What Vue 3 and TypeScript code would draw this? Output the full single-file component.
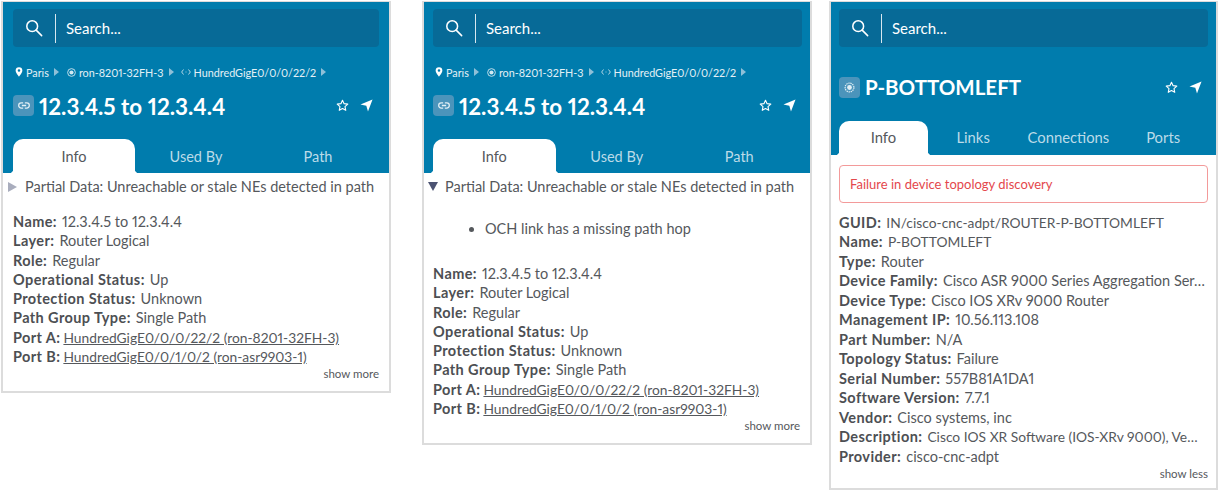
<script setup lang="ts">
import { ref } from "vue";

type Field = { label: string; value: string; tight?: boolean; link?: boolean };
type Crumb = { icon: "pin" | "node" | "port"; text: string };
type Panel = {
  id: string;
  crumbs: Crumb[];
  kind: "link" | "device";
  title: string;
  tabs: string[];
  fields: Field[];
  toggle: string;
  partial?: boolean;
  partialOpen?: boolean;
  failure?: string;
};

const crumbs: Crumb[] = [
  { icon: "pin", text: "Paris" },
  { icon: "node", text: "ron-8201-32FH-3" },
  { icon: "port", text: "HundredGigE0/0/0/22/2" },
];

const linkFields: Field[] = [
  { label: "Name", value: "12.3.4.5 to 12.3.4.4" },
  { label: "Layer", value: "Router Logical" },
  { label: "Role", value: "Regular" },
  { label: "Operational Status", value: "Up" },
  { label: "Protection Status", value: "Unknown" },
  { label: "Path Group Type", value: "Single Path" },
  { label: "Port A", value: "HundredGigE0/0/0/22/2 (ron-8201-32FH-3)", link: true, tight: true },
  { label: "Port B", value: "HundredGigE0/0/1/0/2 (ron-asr9903-1)", link: true, tight: true },
];

const panels = ref<Panel[]>([
  {
    id: "closed",
    crumbs,
    kind: "link",
    title: "12.3.4.5 to 12.3.4.4",
    tabs: ["Info", "Used By", "Path"],
    fields: linkFields,
    toggle: "show more",
    partial: true,
    partialOpen: false,
  },
  {
    id: "open",
    crumbs,
    kind: "link",
    title: "12.3.4.5 to 12.3.4.4",
    tabs: ["Info", "Used By", "Path"],
    fields: linkFields,
    toggle: "show more",
    partial: true,
    partialOpen: true,
  },
  {
    id: "device",
    crumbs: [],
    kind: "device",
    title: "P-BOTTOMLEFT",
    tabs: ["Info", "Links", "Connections", "Ports"],
    failure: "Failure in device topology discovery",
    toggle: "show less",
    fields: [
      { label: "GUID", value: "IN/cisco-cnc-adpt/ROUTER-P-BOTTOMLEFT", tight: true },
      { label: "Name", value: "P-BOTTOMLEFT", tight: true },
      { label: "Type", value: "Router" },
      { label: "Device Family", value: "Cisco ASR 9000 Series Aggregation Ser…" },
      { label: "Device Type", value: "Cisco IOS XRv 9000 Router" },
      { label: "Management IP", value: "10.56.113.108" },
      { label: "Part Number", value: "N/A" },
      { label: "Topology Status", value: "Failure" },
      { label: "Serial Number", value: "557B81A1DA1" },
      { label: "Software Version", value: "7.7.1" },
      { label: "Vendor", value: "Cisco systems, inc" },
      { label: "Description", value: "Cisco IOS XR Software (IOS-XRv 9000), Ve…", tight: true },
      { label: "Provider", value: "cisco-cnc-adpt" },
    ],
  },
]);
</script>

<template>
  <div class="page">
    <section v-for="panel in panels" :key="panel.id" class="card" :class="[panel.kind, panel.id]">
      <header class="head">
        <div class="search">
          <svg class="search-icon" viewBox="0 0 20 20" width="18" height="18" fill="none" stroke="#fff" stroke-width="1.700">
            <circle cx="8" cy="8" r="6" />
            <path d="M12.400 12.400 18.500 18.500" stroke-linecap="round" />
          </svg>
          <span class="search-text">Search...</span>
        </div>

        <div v-if="panel.crumbs.length" class="crumbs">
          <template v-for="crumb in panel.crumbs" :key="crumb.text">
            <svg v-if="crumb.icon === 'pin'" viewBox="0 0 10 12" width="8" height="10" fill="#fff">
              <path fill-rule="evenodd" d="M5 0a4.200 4.200 0 0 0-4.200 4.200C.8 7 5 12 5 12s4.200-5 4.200-7.800A4.200 4.200 0 0 0 5 0Zm0 5.800a1.600 1.600 0 1 1 0-3.200 1.600 1.600 0 0 1 0 3.200Z" />
            </svg>
            <svg v-else-if="crumb.icon === 'node'" class="crumb-node" viewBox="0 0 10 10" width="9" height="9" fill="none" stroke="#d3e8f1">
              <circle cx="5" cy="5" r="4.300" stroke-width="1" />
              <circle cx="5" cy="5" r="2.300" fill="#d3e8f1" stroke="none" />
            </svg>
            <svg v-else viewBox="0 0 12 8" width="10" height="8" fill="none" stroke="#d3e8f1" stroke-width="1">
              <path d="M3 1 .8 4 3 7M9 1l2.200 3L9 7" />
              <path d="M5 4h.5M6.500 4H7" />
            </svg>
            <span>{{ crumb.text }}</span>
            <i class="crumb-arrow"></i>
          </template>
        </div>

        <div class="title-row">
          <span class="badge">
            <svg v-if="panel.kind === 'link'" viewBox="0 0 14 8" width="12" height="7" fill="none" stroke="#e2eff5" stroke-width="1.500">
              <path d="M6 1H3.800a3 3 0 0 0 0 6H6M8 1h2.200a3 3 0 0 1 0 6H8M4.500 4h5" />
            </svg>
            <svg v-else viewBox="0 0 12 12" width="11" height="11" fill="none" stroke="#e2eff5">
              <circle cx="6" cy="6" r="4.800" stroke-dasharray="1.500 .8" stroke-width="1.300" />
              <circle cx="6" cy="6" r="2.600" fill="#e2eff5" stroke="none" />
            </svg>
          </span>
          <h2 class="title">{{ panel.title }}</h2>
          <svg class="star" viewBox="0 0 14 14" width="13" height="13" fill="none" stroke="#fff" stroke-width="1.200" stroke-linejoin="round">
            <path d="m7 1.300 1.700 3.700 4 .5-3 2.700.8 4L7 10.300l-3.500 1.900.8-4-3-2.700 4-.5Z" />
          </svg>
          <svg class="send" viewBox="0 0 14 14" width="13" height="13" fill="#fff">
            <path d="M13.500.5 8.600 13.500 6.800 7.400.5 6Z" />
          </svg>
        </div>

        <nav class="tabs">
          <span v-for="(tab, i) in panel.tabs" :key="tab" class="tab" :class="{ active: i === 0 }">{{ tab }}</span>
        </nav>
      </header>

      <div class="body">
        <div v-if="panel.partial" class="partial" :class="{ open: panel.partialOpen }">
          <i class="caret"></i>
          <span>Partial Data: Unreachable or stale NEs detected in path</span>
        </div>
        <ul v-if="panel.partialOpen" class="hops">
          <li>OCH link has a missing path hop</li>
        </ul>
        <div v-if="panel.failure" class="failure">{{ panel.failure }}</div>

        <dl class="fields">
          <div v-for="field in panel.fields" :key="field.label" class="field">
            <dt>{{ field.label }}:</dt>
            <dd :class="{ link: field.link, tight: field.tight }">{{ field.value }}</dd>
          </div>
        </dl>
        <div class="toggle">{{ panel.toggle }}</div>
      </div>
    </section>
  </div>
</template>

<style scoped>
.page {
  display: grid;
  grid-template-columns: 421px 407px 389px;
  align-items: start;
  padding: 1px 0 0 1px;
  font-family: Lato, "Open Sans", sans-serif;
  font-variant-numeric: proportional-nums;
  color: #55585c;
}

.card {
  width: 390px;
  box-sizing: border-box;
  border: 2px solid #dcdcdc;
  border-top-width: 1px;
  background: #fff;
}

.card.device {
  width: 389px;
}

.head {
  background: #007cad;
  padding: 7px 10px 0;
}

.open .head {
  padding: 7px 8px 0 9px;
}

.device .head {
  padding: 7px 8px 0;
}

.search {
  display: flex;
  align-items: center;
  height: 38px;
  border-radius: 4px;
  background: #076a97;
  color: #fff;
}

.search-icon {
  margin: 0 12px;
}

.search-text {
  height: 29px;
  line-height: 29px;
  padding-left: 10px;
  border-left: 1px solid #d7e7ef;
  font-size: 15px;
}

.crumbs {
  display: flex;
  align-items: center;
  gap: 3px;
  height: 16px;
  margin: 17px 0 0 2px;
  font-size: 10.800px;
  color: #e3f0f6;
}

.crumb-node {
  margin-left: 1px;
}

.crumb-arrow {
  width: 0;
  height: 0;
  margin: 0 4px 0 2px;
  border-left: 5px solid #8fc0d8;
  border-top: 4px solid transparent;
  border-bottom: 4px solid transparent;
}

.title-row {
  display: flex;
  align-items: center;
  height: 30px;
  margin-top: 10px;
}

.device .title-row {
  margin-top: 25px;
}

.badge {
  display: flex;
  align-items: center;
  justify-content: center;
  flex: none;
  width: 21px;
  height: 21px;
  border-radius: 4px;
  background: #4b94bb;
}

.title {
  flex: 1;
  margin: 0 0 0 5px;
  padding-top: 2px;
  font-size: 22.400px;
  font-weight: 700;
  color: #fff;
}

.device .title {
  padding-top: 0;
  font-size: 20.500px;
}

.star {
  margin-right: 11px;
}

.send {
  margin-right: 6px;
}

.tabs {
  display: flex;
  margin-top: 19px;
}

.tab {
  position: relative;
  width: 122px;
  height: 34px;
  line-height: 36px;
  text-align: center;
  font-size: 14.500px;
  color: #bcdbe8;
}

.open .tab {
  width: 122.500px;
}

.device .tab {
  width: 89px;
  line-height: 33px;
  font-size: 14.800px;
}

.device .tab:nth-child(2) {
  width: 91px;
}

.device .tab:nth-child(3) {
  width: 100px;
}

.device .tab:nth-child(4) {
  width: 90px;
}

.tab.active {
  background: #fff;
  color: #55585c;
  border-radius: 10px 10px 0 0;
}

.tab.active::before,
.tab.active::after {
  content: "";
  position: absolute;
  bottom: 0;
  width: 4px;
  height: 4px;
}

.tab.active::before {
  left: -4px;
  background: radial-gradient(circle at 0 0, #007cad 4px, #fff 4.500px);
}

.tab.active::after {
  right: -4px;
  background: radial-gradient(circle at 100% 0, #007cad 4px, #fff 4.500px);
}

.body {
  padding: 5px 10px 9px;
  font-size: 14.500px;
}

.open .body {
  padding-left: 9px;
}

.device .body {
  padding: 10px 8px 6px;
}

.partial {
  display: flex;
  align-items: center;
  height: 17px;
  white-space: nowrap;
}

.caret {
  width: 0;
  height: 0;
  margin: 0 8px 0 -5px;
  border-left: 9px solid #a9adbd;
  border-top: 5px solid transparent;
  border-bottom: 5px solid transparent;
}

.partial.open .caret {
  margin: 0 7px 0 -5px;
  border-left: 5px solid transparent;
  border-right: 5px solid transparent;
  border-top: 9px solid #4c5372;
  border-bottom: 0;
}

.hops {
  margin: 0;
  padding: 24px 0 0 52px;
  height: 28px;
  line-height: 19px;
}

.failure {
  height: 38px;
  box-sizing: border-box;
  border: 1px solid #f39a9a;
  border-radius: 4px;
  padding-left: 10px;
  font-size: 13px;
  line-height: 36px;
  color: #e4474c;
}

.fields {
  margin: 17px 0 0;
  line-height: 19.300px;
}

.device .fields {
  margin-top: 9.500px;
  line-height: 19.500px;
}

.field {
  display: flex;
  gap: 5px;
  white-space: nowrap;
}

dt {
  flex: none;
  font-weight: 700;
  letter-spacing: 0.4px;
  color: #4d4f53;
}

dd {
  margin: 0;
}

dd.tight {
  font-size: 13.800px;
}

dd.link {
  margin-left: -2px;
  text-decoration: underline;
}

.toggle {
  text-align: right;
  font-size: 11.500px;
  line-height: 16px;
}
</style>

<style>
body {
  background: #fff;
}
</style>
